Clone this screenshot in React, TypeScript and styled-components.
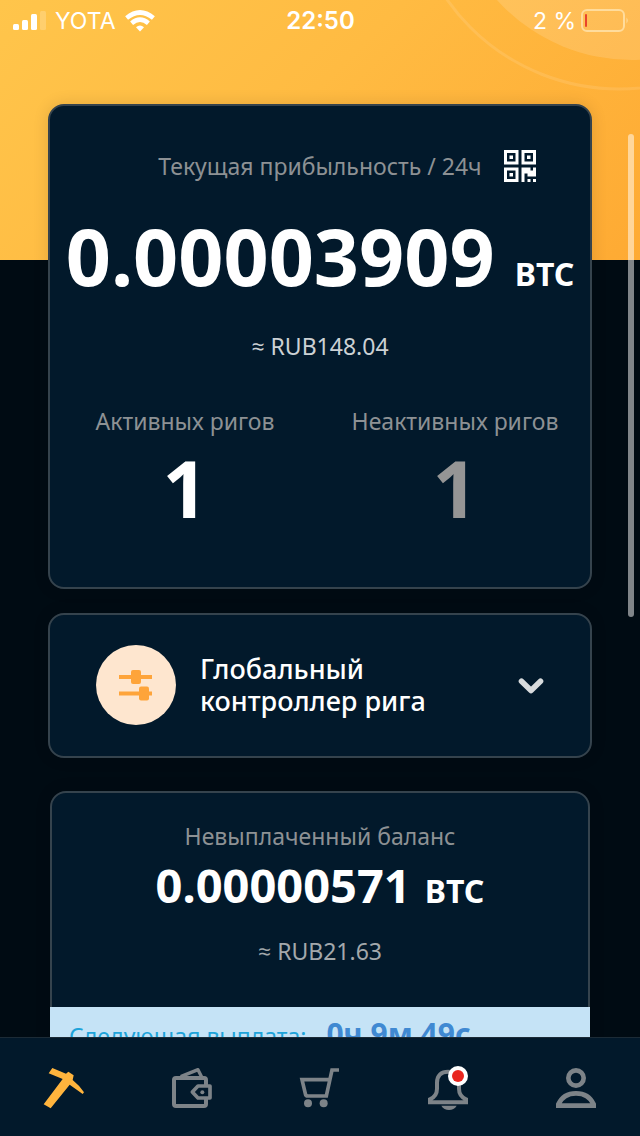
import React from "react";
import styled, { createGlobalStyle } from "styled-components";

const GlobalStyle = createGlobalStyle`
  * { box-sizing: border-box; }
  body { margin: 0; background: #000b13; }
  button { border: 0; padding: 0; margin: 0; background: none; color: inherit; font: inherit; cursor: pointer; }
  h1, h2, p { margin: 0; font-weight: 400; }
  svg { display: block; }
`;

const Screen = styled.div`
  position: relative;
  height: 100vh;
  display: flex;
  flex-direction: column;
  overflow: hidden;
  background: #000b13;
  color: #fff;
  font-family: "Noto Sans", "Open Sans", sans-serif;
`;

const Backdrop = styled.div`
  position: absolute;
  top: 0;
  left: 0;
  right: 0;
  height: 260px;
  overflow: hidden;
  background: linear-gradient(135deg, #ffc54b 0%, #ffbb42 45%, #feaa33 100%);
`;

const Bubbles = styled.svg`
  position: absolute;
  top: 0;
  right: 0;
`;

const StatusBar = styled.header`
  position: relative;
  flex: none;
  height: 41px;
  padding: 1px 11px 0 12px;
  display: grid;
  grid-template-columns: 1fr auto 1fr;
  align-items: center;
  font-family: Inter, "Liberation Sans", sans-serif;
  font-size: 23px;
  line-height: 32px;
`;

const StatusSide = styled.div<{ $end?: boolean }>`
  display: flex;
  align-items: center;
  gap: ${(p) => (p.$end ? 5 : 9)}px;
  justify-content: ${(p) => (p.$end ? "flex-end" : "flex-start")};
`;

const Clock = styled.time`
  font-size: 24px;
  font-weight: 600;
`;

const Content = styled.main`
  position: relative;
  flex: 1;
  min-height: 0;
  overflow: hidden;
  padding: 63px 48px 0;
`;

const Card = styled.section`
  border: 2px solid #35434d;
  border-radius: 16px;
  background: #02192b;
  box-shadow: 0 0 16px rgba(0, 0, 0, 0.12);
`;

const ProfitCard = styled(Card)`
  padding: 42px 0 51px;
`;

const TitleRow = styled.div`
  display: grid;
  grid-template-columns: 1fr auto 1fr;
  align-items: center;
  height: 36px;
`;

const Label = styled.h2<{ $column?: number }>`
  grid-column: ${(p) => p.$column ?? "auto"};
  color: #8d9194;
  font-size: 23px;
  line-height: 32px;
  text-align: center;
  white-space: nowrap;
`;

const QrButton = styled.button`
  justify-self: end;
  margin-right: 54px;
`;

const Amount = styled.p<{ $large?: boolean }>`
  display: flex;
  justify-content: center;
  align-items: baseline;
  gap: ${(p) => (p.$large ? 20 : 14)}px;
  margin-top: ${(p) => (p.$large ? 24 : 5)}px;
  font-size: ${(p) => (p.$large ? 79 : 47)}px;
  line-height: ${(p) => (p.$large ? 96 : 56)}px;
  font-weight: 700;
  white-space: nowrap;
`;

const Unit = styled.span`
  font-size: 32px;
  line-height: 32px;
`;

const Fiat = styled.p<{ $dim?: boolean }>`
  margin-top: ${(p) => (p.$dim ? 22 : 26)}px;
  color: ${(p) => (p.$dim ? "#a3a8ab" : "#ccd1d4")};
  font-size: 23px;
  line-height: 32px;
  text-align: center;
`;

const RigGrid = styled.div`
  display: grid;
  grid-template-columns: 1fr 1fr;
  margin-top: 43px;
`;

const RigCount = styled.p<{ $dim?: boolean }>`
  margin-top: 3px;
  color: ${(p) => (p.$dim ? "#959595" : "#fff")};
  font-size: 79px;
  line-height: 96px;
  font-weight: 700;
  text-align: center;
`;

const ControllerCard = styled(Card)`
  margin-top: 24px;
`;

const ControllerButton = styled.button`
  display: flex;
  align-items: center;
  gap: 24px;
  width: 100%;
  padding: 30px 45px 31px 46px;
  text-align: left;
`;

const RoundIcon = styled.span`
  flex: none;
  display: grid;
  place-items: center;
  width: 80px;
  height: 80px;
  border-radius: 50%;
  background: #fee6cf;
`;

const ControllerTitle = styled.span`
  flex: 1;
  font-size: 27px;
  line-height: 32px;
  font-weight: 500;
`;

const BalanceCard = styled(Card)`
  margin: 33px 2px 0;
  padding-top: 27px;
`;

const Payout = styled.div`
  display: flex;
  align-items: baseline;
  gap: 20px;
  margin: 40px -2px 0;
  padding: 3px 19px 24px;
  background: #c5e3f6;
  color: #1ea4da;
  font-size: 23px;
  line-height: 48px;
  white-space: nowrap;
`;

const PayoutTime = styled.strong`
  color: #4089d2;
  font-size: 30px;
  font-weight: 700;
`;

const ScrollThumb = styled.div`
  position: absolute;
  top: 134px;
  right: 6px;
  width: 6px;
  height: 483px;
  border-radius: 3px;
  background: rgba(255, 255, 255, 0.5);
`;

const TabBar = styled.nav`
  position: relative;
  flex: none;
  display: flex;
  padding: 30px 0 28px;
  border-top: 1px solid #1c2b36;
  background: #02192b;
`;

const Tab = styled.button<{ $active?: boolean }>`
  flex: 1;
  display: flex;
  justify-content: center;
  color: ${(p) => (p.$active ? "#ffb43d" : "#7d8388")};
`;

const SignalIcon = () => (
  <svg width="34" height="20" viewBox="0 0 34 20" fill="#fff" aria-hidden="true">
    <rect x="1" y="13" width="6" height="6" rx="1.5" />
    <rect x="10" y="9" width="6" height="10" rx="1.5" />
    <rect x="19" y="3" width="6" height="16" rx="1.5" />
    <rect x="28" y="0" width="6" height="19" rx="1.5" opacity="0.2" />
  </svg>
);

const WifiIcon = () => (
  <svg width="30" height="22" viewBox="0 0 30 22" fill="none" stroke="#fff" strokeWidth="4.6" aria-hidden="true">
    <path d="M1.600 8 Q15 -3 28.400 8" />
    <path d="M6.600 13.200 Q15 6.200 23.400 13.200" />
    <path d="M11 17.200 Q15 13.600 19 17.200 L15 21.400Z" fill="#fff" stroke="none" />
  </svg>
);

const BatteryIcon = () => (
  <svg width="48" height="24" viewBox="0 0 48 24" fill="none" aria-hidden="true">
    <rect x="1" y="1" width="42" height="21" rx="5" stroke="#ffdc9c" strokeWidth="2" />
    <rect x="4" y="5" width="2" height="13" rx="1" fill="#e8432c" />
    <path d="M45.5 8.5 Q48 11.5 45.5 14.5Z" fill="#ffdc9c" />
  </svg>
);

const QrIcon = () => (
  <svg width="32" height="32" viewBox="0 0 32 32" fill="#fff" aria-hidden="true">
    <path
      fillRule="evenodd"
      d="M0 0H14.5V14.5H0ZM3 3V11.5H11.5V3ZM17.5 0H32V14.5H17.5ZM20.500 3V11.500H29V3ZM0 17.500H14.500V32H0ZM3 20.500V29H11.500V20.500Z"
    />
    <path d="M5.500 5.500H9V9H5.500ZM23 5.500H26.500V9H23ZM5.500 23H9V26.500H5.500Z" />
    <path d="M17.500 17.500H26.500V20.500H29V17.500H32V26.500H23.500V23.500H20.500V32H17.500ZM23.500 29H26.500V32H23.500ZM29 29H32V32H29Z" />
  </svg>
);

const SlidersIcon = () => (
  <svg width="34" height="32" viewBox="0 0 34 32" fill="#fea43a" aria-hidden="true">
    <rect x="0" y="6" width="33" height="4" />
    <rect x="12" y="1" width="10" height="14" rx="2" />
    <rect x="0" y="22.500" width="33" height="4" />
    <rect x="20" y="17.500" width="10" height="14" rx="2" />
  </svg>
);

const ChevronIcon = () => (
  <svg width="28" height="18" viewBox="0 0 28 18" fill="none" stroke="#d8dbdd" aria-hidden="true">
    <path d="M4.500 5.200 L14 14.500 L23.500 5.200" strokeWidth="5.600" strokeLinecap="round" strokeLinejoin="round" />
  </svg>
);

const TabIcon = ({ children }: { children: React.ReactNode }) => (
  <svg width="40" height="40" viewBox="0 0 120 120" fill="none" overflow="visible" aria-hidden="true">
    {children}
  </svg>
);

const PickaxeIcon = () => (
  <TabIcon>
    <path
      fill="currentColor"
      d="M25 0 L66 17 L73 11 L89 22 L86 36 Q106 52 120 73 L116 78 L77 50 L20 121 L-1 109 L56 33 L14 16Z"
    />
  </TabIcon>
);

const WalletIcon = () => (
  <TabIcon>
    <g stroke="currentColor" strokeWidth="12" strokeLinejoin="round">
      <path d="M102 51 V36 Q102 30 96 30 H12 Q6 30 6 36 V108 Q6 114 12 114 H96 Q102 114 102 108 V93" />
      <path d="M114 54 H78 L61 72 L78 90 H114Z" strokeWidth="11" />
      <path d="M26 26 L78 5 L89 27" strokeWidth="10" />
    </g>
    <circle cx="91" cy="73" r="6" fill="currentColor" />
  </TabIcon>
);

const CartIcon = () => (
  <TabIcon>
    <path d="M117 6 H96 L79 84 H24 Q17 84 16 77 L6 35 H88" stroke="currentColor" strokeWidth="11" />
    <circle cx="24" cy="106" r="12" fill="currentColor" />
    <circle cx="71" cy="106" r="12" fill="currentColor" />
  </TabIcon>
);

const BellIcon = () => (
  <TabIcon>
    <path
      d="M6 103 V94 Q27 84 27 62 V44 C27 22 40 11 60 11 C80 11 93 22 93 44 V62 Q93 84 114 94 V103Z"
      stroke="currentColor"
      strokeWidth="12"
    />
    <path d="M40 113 H86 Q78 126 63 126 Q48 126 40 113Z" fill="currentColor" />
    <circle cx="90" cy="24" r="30" fill="#fff" />
    <circle cx="90" cy="24" r="18" fill="#e9261f" />
  </TabIcon>
);

const UserIcon = () => (
  <TabIcon>
    <g stroke="currentColor">
      <circle cx="60" cy="30" r="23" strokeWidth="14" />
      <path d="M7 113 V109 Q22 76 60 76 Q98 76 113 109 V113Z" strokeWidth="14" />
    </g>
  </TabIcon>
);

const tabs = [
  { label: "Майнинг", icon: <PickaxeIcon />, active: true },
  { label: "Кошелёк", icon: <WalletIcon /> },
  { label: "Магазин", icon: <CartIcon /> },
  { label: "Уведомления", icon: <BellIcon /> },
  { label: "Профиль", icon: <UserIcon /> },
];

export default function App() {
  return (
    <Screen>
      <GlobalStyle />
      <Backdrop>
        <Bubbles width="240" height="120" viewBox="400 0 240 120" fill="none" aria-hidden="true">
          <circle cx="632" cy="-122" r="182" fill="#fff" opacity="0.14" />
          <circle cx="619" cy="-121" r="210" stroke="#fff" strokeWidth="3" opacity="0.11" />
        </Bubbles>
      </Backdrop>

      <StatusBar>
        <StatusSide>
          <SignalIcon />
          <span>YOTA</span>
          <WifiIcon />
        </StatusSide>
        <Clock>22:50</Clock>
        <StatusSide $end>
          <span>2 %</span>
          <BatteryIcon />
        </StatusSide>
      </StatusBar>

      <Content>
        <ProfitCard>
          <TitleRow>
            <Label $column={2}>Текущая прибыльность / 24ч</Label>
            <QrButton type="button" aria-label="QR-код">
              <QrIcon />
            </QrButton>
          </TitleRow>
          <Amount $large>
            0.00003909 <Unit>BTC</Unit>
          </Amount>
          <Fiat>≈ RUB148.04</Fiat>
          <RigGrid>
            <div>
              <Label>Активных ригов</Label>
              <RigCount>1</RigCount>
            </div>
            <div>
              <Label>Неактивных ригов</Label>
              <RigCount $dim>1</RigCount>
            </div>
          </RigGrid>
        </ProfitCard>

        <ControllerCard>
          <ControllerButton type="button" aria-expanded="false">
            <RoundIcon>
              <SlidersIcon />
            </RoundIcon>
            <ControllerTitle>
              Глобальный
              <br />
              контроллер рига
            </ControllerTitle>
            <ChevronIcon />
          </ControllerButton>
        </ControllerCard>

        <BalanceCard>
          <Label>Невыплаченный баланс</Label>
          <Amount>
            0.00000571 <Unit>BTC</Unit>
          </Amount>
          <Fiat $dim>≈ RUB21.63</Fiat>
          <Payout>
            Следующая выплата: <PayoutTime>0ч 9м 49с</PayoutTime>
          </Payout>
        </BalanceCard>
      </Content>

      <TabBar>
        {tabs.map((tab) => (
          <Tab key={tab.label} type="button" $active={tab.active} aria-label={tab.label}>
            {tab.icon}
          </Tab>
        ))}
      </TabBar>
      <ScrollThumb />
    </Screen>
  );
}
